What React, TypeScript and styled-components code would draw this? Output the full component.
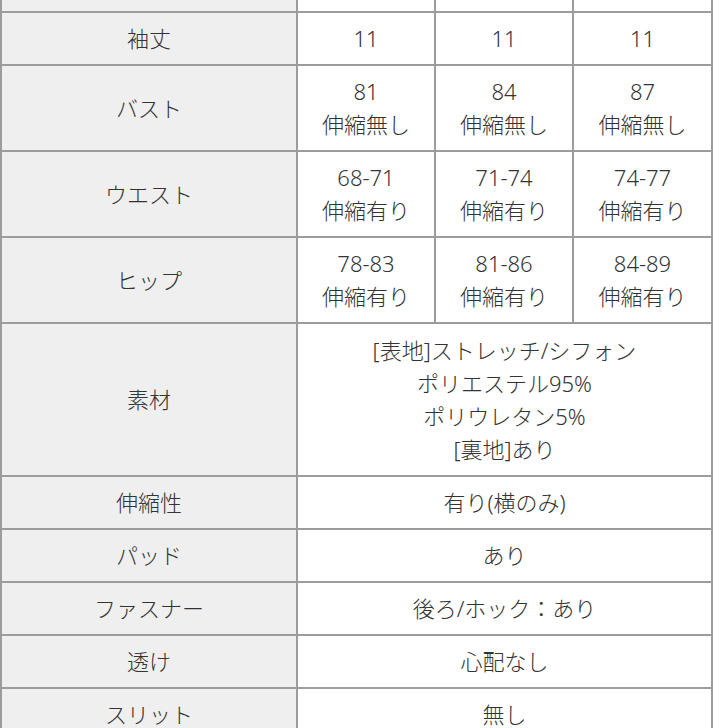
import React from 'react';
import styled, { createGlobalStyle } from 'styled-components';

const GlobalStyle = createGlobalStyle`
  html, body {
    margin: 0;
    padding: 0;
    background: #ffffff;
    overflow: hidden;
  }
  body {
    font-family: "Noto Sans", "Noto Sans CJK JP", sans-serif;
    color: #333333;
  }
`;

const Page = styled.div`
  width: 728px;
  height: 728px;
  overflow: hidden;
`;

// the page is scrolled: the row above 袖丈 only shows its last few pixels
const SizeTable = styled.div`
  display: grid;
  grid-template-columns: 296px 138px 138px 139px;
  width: 713px;
  margin-top: -40px;
  border-left: 2px solid #9c9c9c;
`;

const Cell = styled.div<{ $label?: boolean; $span?: number; $height?: number }>`
  box-sizing: border-box;
  grid-column: span ${(p) => p.$span ?? 1};
  display: flex;
  flex-direction: column;
  align-items: center;
  justify-content: center;
  padding: 9px 4px;
  min-height: ${(p) => p.$height ?? 53}px;
  border-right: 2px solid #9c9c9c;
  border-bottom: 2px solid #9c9c9c;
  background: ${(p) => (p.$label ? '#efefef' : '#ffffff')};
  font-family: "Noto Sans", "Noto Sans CJK JP", sans-serif;
  font-weight: 300;
  font-size: 22px;
  line-height: 33px;
  color: #333333;
  text-align: center;
  white-space: nowrap;
`;

const Line = styled.span`
  display: block;
`;

type Row = { label: string; values: string[][]; merged?: boolean; height?: number };

const rows: Row[] = [
  { label: '袖丈', values: [['11'], ['11'], ['11']] },
  { label: 'バスト', values: [['81', '伸縮無し'], ['84', '伸縮無し'], ['87', '伸縮無し']] },
  { label: 'ウエスト', values: [['68-71', '伸縮有り'], ['71-74', '伸縮有り'], ['74-77', '伸縮有り']] },
  { label: 'ヒップ', values: [['78-83', '伸縮有り'], ['81-86', '伸縮有り'], ['84-89', '伸縮有り']] },
  {
    label: '素材',
    merged: true,
    height: 153,
    values: [['[表地]ストレッチ/シフォン', 'ポリエステル95%', 'ポリウレタン5%', '[裏地]あり']],
  },
  { label: '伸縮性', merged: true, values: [['有り(横のみ)']] },
  { label: 'パッド', merged: true, values: [['あり']] },
  { label: 'ファスナー', merged: true, values: [['後ろ/ホック：あり']] },
  { label: '透け', merged: true, values: [['心配なし']] },
  { label: 'スリット', merged: true, values: [['無し']] },
];

const App = () => {
  return (
    <Page>
      <GlobalStyle />
      <SizeTable>
        <Cell $label>&nbsp;</Cell>
        <Cell>&nbsp;</Cell>
        <Cell>&nbsp;</Cell>
        <Cell>&nbsp;</Cell>
        {rows.map((row) => (
          <React.Fragment key={row.label}>
            <Cell $label $height={row.height}>
              {row.label}
            </Cell>
            {row.values.map((lines, i) => (
              <Cell key={i} $span={row.merged ? 3 : 1} $height={row.height}>
                {lines.map((line) => (
                  <Line key={line}>{line}</Line>
                ))}
              </Cell>
            ))}
          </React.Fragment>
        ))}
      </SizeTable>
    </Page>
  );
};

export default App;
